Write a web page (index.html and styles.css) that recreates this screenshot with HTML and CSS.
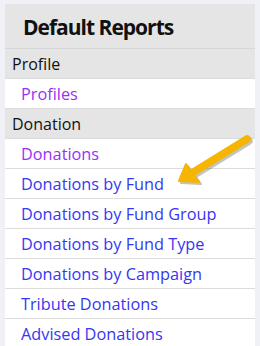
FILE: index.html
```html
<!DOCTYPE html>
<html lang="en">
<head>
    <meta charset="UTF-8">
    <meta name="viewport" content="width=device-width, initial-scale=1.0">
    <title>Default Reports</title>
    <link rel="stylesheet" href="styles.css">
</head>
<body>
    <div class="reports">
        <h2>Default Reports</h2>
        <div class="group">Profile</div>
        <a class="item visited" href="#">Profiles</a>
        <div class="group">Donation</div>
        <a class="item visited" href="#">Donations</a>
        <a class="item" href="#">Donations by Fund</a>
        <a class="item" href="#">Donations by Fund Group</a>
        <a class="item" href="#">Donations by Fund Type</a>
        <a class="item" href="#">Donations by Campaign</a>
        <a class="item" href="#">Tribute Donations</a>
        <a class="item" href="#">Advised Donations</a>

        <!-- callout arrow -->
        <svg class="arrow" width="90" height="62" viewBox="0 0 90 62">
            <g transform="translate(2,2)" fill="#555" opacity="0.35">
                <path d="M76 9 L21 43" stroke="#555" stroke-width="7.5" stroke-linecap="round"/>
                <path d="M8 51 L15 34 L28 52 Z" stroke="#555" stroke-width="2" stroke-linejoin="round"/>
            </g>
            <path d="M76 9 L21 43" stroke="#f6b500" stroke-width="7.5" stroke-linecap="round"/>
            <path d="M8 51 L15 34 L28 52 Z" fill="#f6b500" stroke="#f6b500" stroke-width="2" stroke-linejoin="round"/>
        </svg>
    </div>
</body>
</html>
```

FILE: styles.css
```css
*{
    margin:0;
    padding:0;
    box-sizing: border-box;
}
body{
    background-color: #eff1f7;
    padding:4px 5px;
    font-family: "Open Sans", "DejaVu Sans", sans-serif;
}
.reports{
    position:relative;
    width:250px;
    background-color: white;
}
.reports h2{
    background-color: #e5e5e5;
    height:45px;
    padding:9px 0 0 18px;
    font-size:21px;
    font-weight:700;
    letter-spacing:-1px;
    color:#111;
    border-bottom:1px solid #d6d6d6;
}
.group{
    background-color: #e5e5e5;
    height:30px;
    padding:4px 0 0 7px;
    font-size:16px;
    color:#111;
    border-bottom:1px solid #dcdcdc;
}
.item{
    display:block;
    height:30px;
    padding:4px 0 0 16px;
    font-size:16.3px;
    color:#3636f5;
    text-decoration:none;
    border-bottom:1px solid #dcdcdc;
}
.item.visited{
    color:#9a30f5;
}
.arrow{
    position:absolute;
    left:166px;
    top:126px;
}
```
